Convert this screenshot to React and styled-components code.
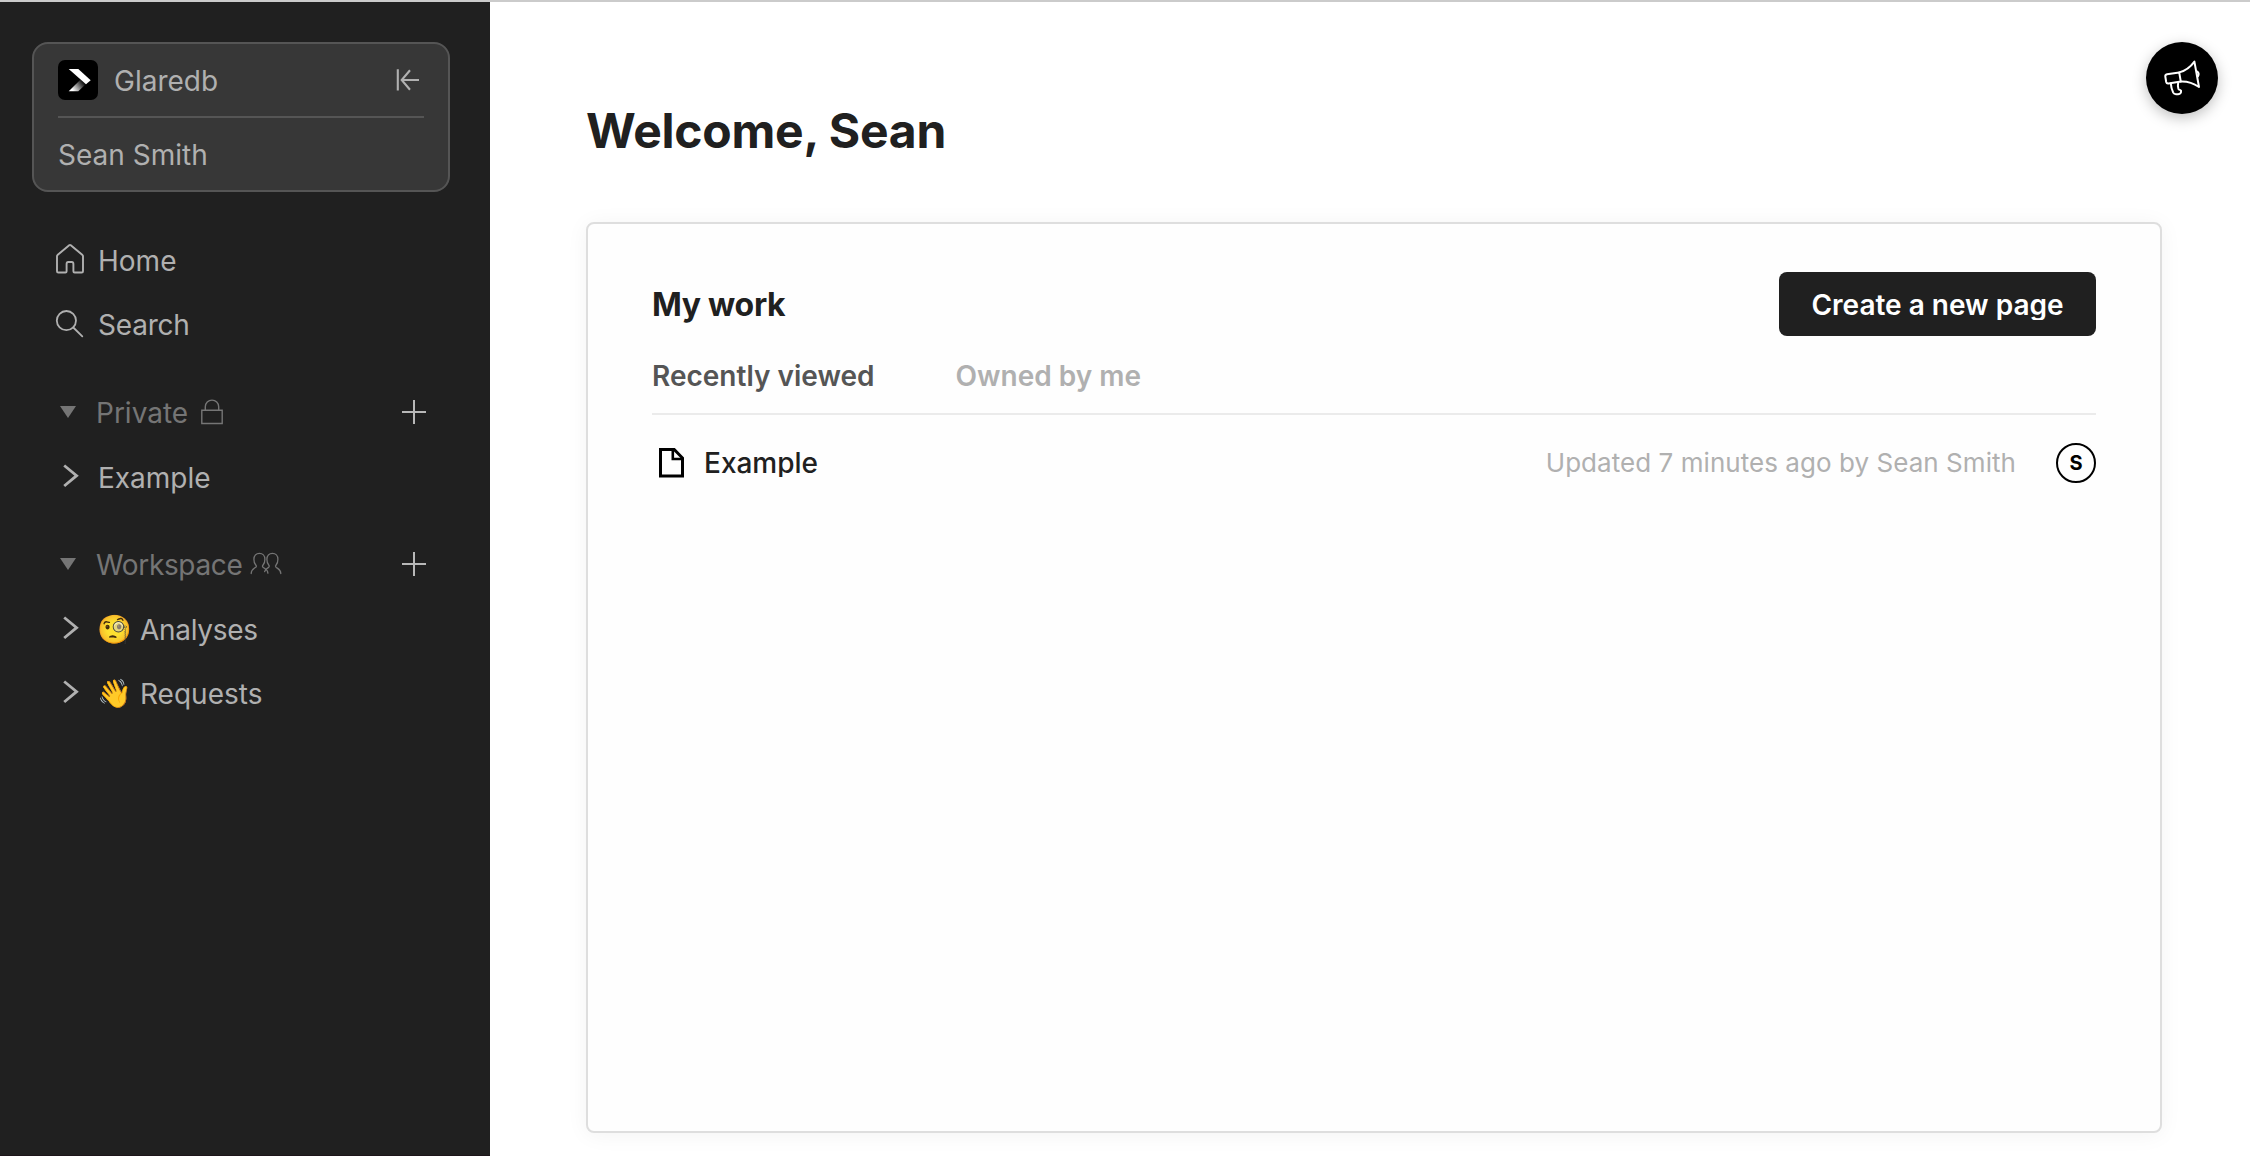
import React from 'react';
import styled, { createGlobalStyle } from 'styled-components';

const GlobalStyle = createGlobalStyle`
  *, *::before, *::after { box-sizing: border-box; }
  body {
    margin: 0;
    background: #fff;
    font-family: Inter, "Liberation Sans", sans-serif;
    font-size: 28px;
    overflow: hidden;
  }
  svg { display: block; flex: none; }
`;

const Page = styled.div`
  display: flex;
  width: 100%;
  height: 1156px;
  border-top: 2px solid #cbcbcb;
`;

const Sidebar = styled.aside`
  flex: none;
  width: 490px;
  padding: 40px 40px 0 32px;
  border-bottom: 1px solid #1d151a;
  background: #202020;
  color: #b0b0b0;
`;

const OrgCard = styled.div`
  height: 150px;
  width: 418px;
  padding: 16px 24px 0;
  border: 2px solid #555;
  border-radius: 16px;
  background: #373737;
`;

const OrgRow = styled.div`
  display: flex;
  align-items: center;
  height: 58px;
  padding-bottom: 16px;
  border-bottom: 2px solid #555;
`;

const OrgName = styled.span`
  flex: 1;
  margin-left: 16px;
  padding-top: 2px;
  line-height: 34px;
`;

const UserName = styled.div`
  height: 72px;
  padding-top: 2px;
  line-height: 70px;
`;

const Nav = styled.nav`
  padding: ${(p) => (p.$primary ? '37px 0 1px' : '0')};
`;

const NavItem = styled.a`
  display: flex;
  align-items: center;
  height: 64px;
  line-height: 34px;
  letter-spacing: ${(p) => p.$tracking || 0}px;
`;

const IconSlot = styled.span`
  display: flex;
  flex: none;
  width: 66px;
  padding-left: ${(p) => p.$indent}px;
  padding-bottom: ${(p) => p.$lift || 0}px;
`;

const Emoji = styled.span`
  width: 42px;
  flex: none;
  margin-left: -1px;
  margin-right: 1px;
  padding-bottom: 3px;
  white-space: nowrap;
`;

const GroupHeader = styled.div`
  display: flex;
  align-items: center;
  height: 65px;
  margin-top: 23px;
  padding: 0 24px 3px 0;
  color: #757575;
`;

const GroupTitle = styled.span`
  padding-top: 2px;
  line-height: 34px;
  margin-left: -2px;
  margin-right: ${(p) => p.$gap}px;
  letter-spacing: ${(p) => p.$tracking || 0}px;
`;

const Spacer = styled.span`
  flex: 1;
`;

const Main = styled.main`
  flex: 1;
  padding: 0 88px 0 96px;
`;

const TopBar = styled.header`
  height: 220px;
  padding-top: 99px;
`;

const Welcome = styled.h1`
  margin: 0;
  font-size: 48px;
  font-weight: 700;
  line-height: 59px;
  letter-spacing: -0.24px;
  color: #202020;
`;

const Panel = styled.section`
  height: 911px;
  padding: 48px 64px;
  border: 2px solid #dedede;
  border-radius: 8px;
  background: #fefefe;
  box-shadow: 0 2px 22px rgba(0, 0, 0, 0.05);
`;

const PanelHead = styled.div`
  display: flex;
  align-items: center;
  justify-content: space-between;
  height: 64px;
`;

const PanelTitle = styled.h2`
  margin: 0;
  padding-top: 1px;
  font-size: 32px;
  font-weight: 700;
  letter-spacing: -0.3px;
  line-height: 39px;
  color: #202020;
`;

const PrimaryButton = styled.button`
  display: flex;
  justify-content: center;
  width: 317px;
  height: 64px;
  padding: 18px 0 0;
  border: 0;
  border-radius: 8px;
  background: #202020;
  color: #fff;
  font: 600 28px Inter, "Liberation Sans", sans-serif;
`;

const ButtonLabel = styled.span`
  height: 30px;
  line-height: 30px;
  overflow: hidden;
`;

const Tabs = styled.div`
  display: flex;
  gap: 81px;
  height: 79px;
  padding-top: 23px;
  border-bottom: 2px solid #ebebeb;
`;

const Tab = styled.span`
  font-weight: 600;
  line-height: 34px;
  color: ${(p) => (p.$active ? '#555' : '#b0b0b0')};
`;

const FileRow = styled.div`
  display: flex;
  align-items: center;
  height: 96px;
  padding-left: 7px;
`;

const FileName = styled.span`
  flex: 1;
  margin-left: 20px;
  height: 28px;
  line-height: 28px;
  overflow: hidden;
  font-weight: 500;
  color: #202020;
`;

const Updated = styled.span`
  margin-right: 40px;
  padding-bottom: 1px;
  font-size: 26px;
  line-height: 31px;
  letter-spacing: 0.05px;
  color: #b0b0b0;
`;

const Avatar = styled.span`
  width: 40px;
  height: 40px;
  border: 2px solid #000;
  border-radius: 50%;
  font-size: 20px;
  font-weight: 700;
  line-height: 36px;
  text-align: center;
  color: #000;
`;

const FeedbackButton = styled.button`
  position: fixed;
  top: 42px;
  right: 32px;
  width: 72px;
  height: 72px;
  padding: 0;
  border: 0;
  border-radius: 50%;
  background: #000;
  box-shadow: 0 4px 14px rgba(0, 0, 0, 0.25);
`;

const Logo = () => (
  <svg width="40" height="40" viewBox="0 0 40 40">
    <defs>
      <linearGradient id="fade" gradientUnits="userSpaceOnUse" x1="13" y1="30.5" x2="24.5" y2="21.5">
        <stop offset="0.1" stopColor="#fff" />
        <stop offset="1" stopColor="#111" />
      </linearGradient>
    </defs>
    <rect width="40" height="40" rx="7" />
    <path d="M10.7 31.2H20.3L28 24L22.6 19.5Z" fill="url(#fade)" />
    <path d="M10.7 9H20.3L32.7 20.2L28 24.2Z" fill="#fff" />
  </svg>
);

const CollapseIcon = () => (
  <svg width="28" height="24" viewBox="0 0 28 24" fill="none" stroke="#b0b0b0" strokeWidth="2.1">
    <path d="M1.8 1.3V22.5M23 12H6M14 2.3L5.7 12L14 21.7" />
  </svg>
);

const HomeIcon = () => (
  <svg width="30" height="32" viewBox="0 0 30 32" fill="none" stroke="currentColor" strokeWidth="1.9" strokeLinejoin="round">
    <path d="M2 13.2Q2 12.6 2.5 12.1L14.2 2.2Q15 1.6 15.8 2.2L27.5 12.1Q28 12.6 28 13.2V28.2Q28 29.5 26.7 29.5H19.6Q18.4 29.5 18.4 28.2V21Q18.4 19 16.8 19H13.2Q11.6 19 11.6 21V28.2Q11.6 29.5 10.4 29.5H3.3Q2 29.5 2 28.2Z" />
  </svg>
);

const SearchIcon = () => (
  <svg width="30" height="30" viewBox="0 0 30 30" fill="none" stroke="currentColor" strokeWidth="1.8" strokeLinecap="round">
    <circle cx="11.4" cy="11.6" r="9.6" />
    <path d="M18.3 18.5L27.3 27.4" />
  </svg>
);

const Triangle = () => (
  <svg width="16" height="12" viewBox="0 0 16 12">
    <path d="M0 0H16L8 12Z" fill="#757575" />
  </svg>
);

const Chevron = () => (
  <svg width="18" height="24" viewBox="0 0 18 24" fill="none" stroke="#b0b0b0" strokeWidth="2.8">
    <path d="M2.2 1.5L14.6 11.7L2.2 22" />
  </svg>
);

const PlusIcon = () => (
  <svg width="24" height="24" viewBox="0 0 24 24" stroke="#b8b8b8" strokeWidth="2">
    <path d="M12 0V24M0 12H24" />
  </svg>
);

const LockIcon = () => (
  <svg width="24" height="26" viewBox="0 0 24 26" fill="none" stroke="#757575" strokeWidth="1.4">
    <path d="M1.8 11.2H22.2V24.5H1.8ZM5.3 11V7.8A6.7 6.7 0 0 1 18.7 7.8V11" />
  </svg>
);

const PeopleIcon = () => (
  <svg width="32" height="24" viewBox="0 0 32 24" fill="none" stroke="#757575" strokeWidth="1.3" strokeLinecap="round">
    <path d="M1.2 21.6C1.2 17.5 3.5 16.9 5.8 15.2C6.7 14.4 6.3 13.5 5.6 12.7C4.3 11.2 3.9 9.4 3.9 7.2C3.9 3.6 6.2 1.3 9.4 1.3C12.6 1.3 14.9 3.6 14.9 7.2C14.9 9.4 14.5 11.2 13.2 12.7C12.5 13.5 12.1 14.4 13 15.2C15.3 16.9 17.9 17.5 17.9 21.2" />
    <path d="M14.6 19.6C15.4 17 17 16.2 18.8 15.2C19.7 14.4 19.3 13.5 18.6 12.7C17.3 11.2 16.9 9.4 16.9 7.2C16.9 3.6 19.2 1.3 22.4 1.3C25.6 1.3 27.9 3.6 27.9 7.2C27.9 9.4 27.5 11.2 26.2 12.7C25.5 13.5 25.1 14.4 26 15.2C28.3 16.9 30.8 17.5 30.8 21.6" />
  </svg>
);

const FileIcon = () => (
  <svg width="25" height="30" viewBox="0 0 25 30" fill="none" stroke="#000" strokeWidth="3">
    <path d="M1.5 1.5H15.2L23.5 10V28.1H1.5Z" />
    <path d="M13.8 1.5V11H23.5" strokeWidth="2.6" />
  </svg>
);

const MegaphoneIcon = () => (
  <svg width="72" height="72" viewBox="0 0 72 72" fill="none" stroke="#fff" strokeWidth="2" strokeLinejoin="round" strokeLinecap="round">
    <path d="M33.2 30.4L21 32.2Q19 32.6 19.3 34.5L20.2 40Q20.6 41.8 22.5 41.5L34.8 39.6Z" />
    <path d="M33.2 30.4C39.5 28.8 44.5 25 48.4 19.6L53 45C47 41 41.5 39.3 34.8 39.6" />
    <path d="M51.2 29.6Q53.6 31.6 52 34.2" />
    <path d="M24.8 41.4C25 45 26 48 27.2 50.6Q28 52.2 30 52.2H32Q35.6 51.6 35 48.8C34.8 47.6 33 48.2 32.4 46.8C31.8 44.8 31.6 43.6 32.2 40.4" />
  </svg>
);

export default function App() {
  return (
    <>
      <GlobalStyle />
      <Page>
        <Sidebar>
          <OrgCard>
            <OrgRow>
              <Logo />
              <OrgName>Glaredb</OrgName>
              <CollapseIcon />
            </OrgRow>
            <UserName>Sean Smith</UserName>
          </OrgCard>
          <Nav $primary>
            <NavItem><IconSlot $indent={23} $lift={4}><HomeIcon /></IconSlot>Home</NavItem>
            <NavItem $tracking={-0.2}><IconSlot $indent={23} $lift={3}><SearchIcon /></IconSlot>Search</NavItem>
          </Nav>
          <Nav>
            <GroupHeader>
              <IconSlot $indent={28}><Triangle /></IconSlot>
              <GroupTitle $gap={12}>Private</GroupTitle>
              <LockIcon />
              <Spacer />
              <PlusIcon />
            </GroupHeader>
            <NavItem><IconSlot $indent={30} $lift={4}><Chevron /></IconSlot>Example</NavItem>
          </Nav>
          <Nav>
            <GroupHeader>
              <IconSlot $indent={28}><Triangle /></IconSlot>
              <GroupTitle $gap={8} $tracking={-0.35}>Workspace</GroupTitle>
              <PeopleIcon />
              <Spacer />
              <PlusIcon />
            </GroupHeader>
            <NavItem $tracking={-0.3}><IconSlot $indent={30} $lift={4}><Chevron /></IconSlot><Emoji>🧐</Emoji>Analyses</NavItem>
            <NavItem><IconSlot $indent={30} $lift={4}><Chevron /></IconSlot><Emoji>👋</Emoji>Requests</NavItem>
          </Nav>
        </Sidebar>
        <Main>
          <TopBar>
            <Welcome>Welcome, Sean</Welcome>
          </TopBar>
          <Panel>
            <PanelHead>
              <PanelTitle>My work</PanelTitle>
              <PrimaryButton><ButtonLabel>Create a new page</ButtonLabel></PrimaryButton>
            </PanelHead>
            <Tabs>
              <Tab $active>Recently viewed</Tab>
              <Tab>Owned by me</Tab>
            </Tabs>
            <FileRow>
              <FileIcon />
              <FileName>Example</FileName>
              <Updated>Updated 7 minutes ago by Sean Smith</Updated>
              <Avatar>S</Avatar>
            </FileRow>
          </Panel>
        </Main>
      </Page>
      <FeedbackButton aria-label="Feedback"><MegaphoneIcon /></FeedbackButton>
    </>
  );
}
